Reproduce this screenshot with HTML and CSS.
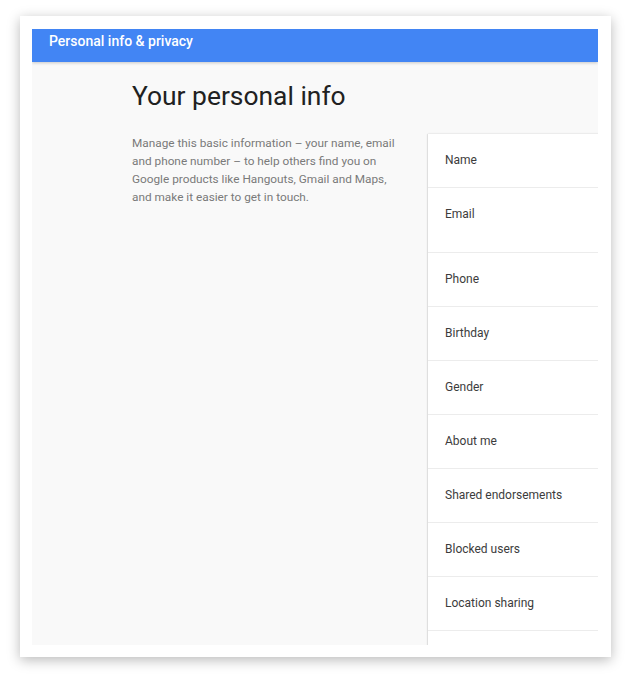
FILE: index.html
```html
<!DOCTYPE html>
<html lang="en">
<head>
<meta charset="utf-8">
<title>Personal info &amp; privacy</title>
<link rel="stylesheet" href="styles.css">
</head>
<body>
<div class="frame">
  <div class="screen">
    <header class="topbar">Personal info &amp; privacy</header>
    <main class="main">
      <h1 class="title">Your personal info</h1>
      <div class="content">
        <p class="intro">Manage this basic information – your name, email and phone number – to help others find you on Google products like Hangouts, Gmail and Maps, and make it easier to get in touch.</p>
        <ul class="list">
          <li class="row">Name</li>
          <li class="row row-tall">Email</li>
          <li class="row">Phone</li>
          <li class="row">Birthday</li>
          <li class="row">Gender</li>
          <li class="row">About me</li>
          <li class="row">Shared endorsements</li>
          <li class="row">Blocked users</li>
          <li class="row">Location sharing</li>
          <li class="row">&nbsp;</li>
        </ul>
      </div>
    </main>
  </div>
</div>
</body>
</html>
```
FILE: styles.css
```css
* { box-sizing: border-box; }
html, body {
  margin: 0;
  padding: 0;
  background: #ffffff;
}
body {
  font-family: Roboto, "Liberation Sans", Arial, sans-serif;
  width: 629px;
  height: 680px;
  overflow: hidden;
}
.frame {
  margin: 16px 0 0 20px;
  width: 591px;
  height: 641px;
  padding: 13px 13px 12px 12px;
  background: #ffffff;
  box-shadow: 0 3px 12px rgba(0, 0, 0, 0.28);
}
.screen {
  width: 566px;
  height: 616px;
  background: #f9f9f9;
  overflow: hidden;
  position: relative;
}
.topbar {
  height: 33px;
  background: #4285f4;
  color: #ffffff;
  font-weight: 500;
  font-size: 14px;
  line-height: 20px;
  padding: 2px 0 0 17px;
  box-shadow: 0 1px 3px rgba(0, 0, 0, 0.2);
  position: relative;
  z-index: 1;
}
.main {
  padding: 18px 0 0 100px;
}
.title {
  margin: 0;
  font-size: 26.4px;
  line-height: 32px;
  font-weight: 400;
  color: #212121;
}
.content {
  display: flex;
  align-items: flex-start;
  margin-top: 22px;
}
.intro {
  flex: none;
  width: 295px;
  margin: 0;
  font-size: 11.8px;
  line-height: 18px;
  color: #7a7a7a;
  padding-right: 20px;
}
.list {
  flex: none;
  width: 260px;
  margin: 0 0 0 1px;
  padding: 0;
  list-style: none;
  background: #ffffff;
  box-shadow: 0 0 2px rgba(0, 0, 0, 0.14), -1px 0 1px rgba(0, 0, 0, 0.06);
}
.row {
  height: 54px;
  padding: 17px 18px 0 17px;
  font-size: 12px;
  line-height: 18px;
  color: #3c3c3c;
  border-bottom: 1px solid #ececec;
}
.row-tall {
  height: 65px;
}
```
